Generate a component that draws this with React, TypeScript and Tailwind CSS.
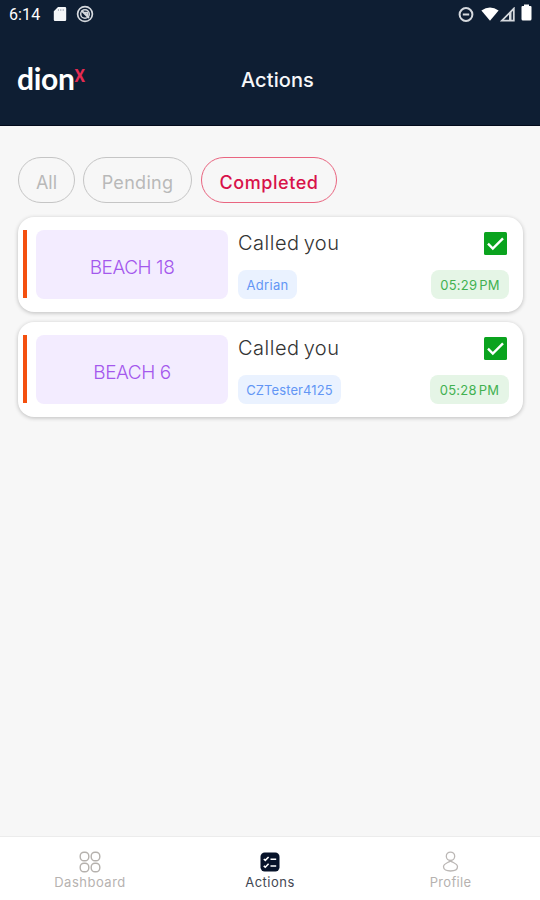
import clsx from 'clsx';

type Action = {
    place: string;
    title: string;
    user: string;
    time: string;
    userClass: string;
    timeClass: string;
};

const actions: Action[] = [
    { place: 'BEACH 18', title: 'Called you', user: 'Adrian', time: '05:29 PM', userClass: 'w-[59px] tracking-[0.3px]', timeClass: 'w-[78px]' },
    { place: 'BEACH 6', title: 'Called you', user: 'CZTester4125', time: '05:28 PM', userClass: 'w-[103px] tracking-[0.1px]', timeClass: 'w-[79px]' },
];

function StatusBar() {
    return (
        <div className="flex h-7 items-center pl-[9px] pr-2 text-white">
            <span className="pt-px font-[Roboto] text-[16px] font-normal leading-7 tracking-[0.1px]">6:14</span>
            <svg className="ml-[13px]" width="14" height="16" viewBox="0 0 14 16">
                <path d="M5 1h7a1.2 1.2 0 0 1 1.2 1.2v11.6A1.2 1.2 0 0 1 12 15H2a1.2 1.2 0 0 1-1.2-1.2V5.2Z" fill="#f4f6f8" />
                <path d="M5.4 3v2M7.8 3v2M10.2 3v2" stroke="#aab1bb" strokeWidth="1" />
            </svg>
            <svg className="ml-[9px]" width="18" height="18" viewBox="0 0 18 18" fill="none" stroke="#d5d9de">
                <circle cx="9" cy="9" r="7.4" strokeWidth="1.7" />
                <circle cx="9" cy="9" r="4.3" strokeWidth="1.5" />
                <path d="M5.5 5.5 13 13M8 7.6h3.4v3.2" strokeWidth="1.8" />
            </svg>
            <div className="ml-auto flex items-center">
                <svg width="16" height="16" viewBox="0 0 16 16" fill="none" stroke="#d5d9de" strokeWidth="2">
                    <circle cx="8" cy="8.5" r="6.4" />
                    <path d="M4.8 8.5h6.4" />
                </svg>
                <svg className="ml-[7px]" width="18" height="15" viewBox="0 0 18 15">
                    <path d="M9 13.8.4 3.6Q9-2.4 17.6 3.6Z" fill="#fff" />
                </svg>
                <svg className="ml-px" width="15" height="15" viewBox="0 0 15 15">
                    <path d="M1.8 13.6H13.8V1.6Z" fill="none" stroke="#d5d9de" strokeWidth="1.8" />
                    <path d="M9 6v7h2.5V4Z" fill="#d5d9de" />
                </svg>
                <svg className="mb-1 ml-[6px]" width="11" height="17" viewBox="0 0 11 17">
                    <path d="M3 .5h5V2h1.5a1 1 0 0 1 1 1v12a1.5 1.5 0 0 1-1.5 1.5H2A1.5 1.5 0 0 1 .5 15V3a1 1 0 0 1 1-1H3Z" fill="#fff" />
                </svg>
            </div>
        </div>
    );
}

function Header() {
    return (
        <header className="h-[126px] border-b border-[#020a1b] bg-[#0e1e33]">
            <StatusBar />
            <div className="grid h-[104px] grid-cols-[241px_1fr] items-center">
                <div className="flex items-center pb-1 pl-[17px] font-[Lato] leading-none text-white">
                    <span className="text-[30px] font-bold tracking-[-0.3px]">dion</span>
                    <span className="mb-[12px] inline-block scale-y-125 text-[20px] font-bold text-[#e62b51]">x</span>
                </div>
                <h1 className="whitespace-nowrap text-[20px] font-medium tracking-[0.1px] text-[#f6f7f9]">Actions</h1>
            </div>
        </header>
    );
}

function Chip({ label, active, className }: { label: string; active?: boolean; className: string }) {
    return (
        <button
            className={clsx(
                'h-[46px] whitespace-nowrap rounded-full border pt-[5px] text-center text-[18px]',
                active ? 'border-[#e96580] font-medium text-[#d8124a]' : 'border-[#c5c5c5] text-[#b9b9b9]',
                className,
            )}
        >
            {label}
        </button>
    );
}

function CheckBox() {
    return (
        <svg width="23" height="23" viewBox="0 0 23 23">
            <rect width="23" height="23" rx="1.5" fill="#0aa31e" />
            <path d="m4 11.7 4.8 4.8L19 6.3" fill="none" stroke="#fff" strokeWidth="2.4" />
        </svg>
    );
}

function ActionCard({ item }: { item: Action }) {
    return (
        <div className="flex h-[95px] rounded-[16px] bg-white py-[13px] pl-[5px] pr-[14px] shadow-[0_1px_4px_rgba(0,0,0,0.24)]">
            <div className="h-[68px] w-1 bg-[#f4500f]" />
            <div className="ml-[9px] flex h-[69px] w-[192px] items-center justify-center rounded-lg bg-[#f3ecff] pt-[7px] text-[19px] font-light tracking-[-0.45px] text-[#a458ed]">
                {item.place}
            </div>
            <div className="ml-[10px] flex flex-1 flex-col justify-between">
                <div className="flex h-[27px] items-center justify-between pr-[2px]">
                    <span className="pb-[2px] text-[20px] font-light tracking-[0.5px] text-[#333] [word-spacing:-2px]">{item.title}</span>
                    <CheckBox />
                </div>
                <div className="flex h-[29px] justify-between whitespace-nowrap text-center text-[13px] leading-[31px]">
                    <span className={clsx('rounded-lg bg-[#eaf2ff] text-[#6396f5]', item.userClass)}>{item.user}</span>
                    <span className={clsx('rounded-lg bg-[#e5f5e6] tracking-[0.25px] text-[#42b151] [word-spacing:-2px]', item.timeClass)}>
                        {item.time}
                    </span>
                </div>
            </div>
        </div>
    );
}

function DashboardIcon() {
    return (
        <svg width="22" height="22" viewBox="0 0 22 22" fill="none" stroke="#b5b1ad" strokeWidth="1.4">
            <rect x="1.2" y="1.2" width="8.6" height="8.6" rx="3.8" />
            <rect x="12.2" y="1.2" width="8.6" height="8.6" rx="3.8" />
            <rect x="1.2" y="12.2" width="8.6" height="8.6" rx="3.8" />
            <rect x="12.2" y="12.2" width="8.6" height="8.6" rx="3.8" />
        </svg>
    );
}

function ActionsIcon() {
    return (
        <svg width="22" height="22" viewBox="0 0 22 22" fill="none">
            <rect x="1.5" y="1.5" width="19" height="19" rx="4.2" fill="#07132a" />
            <path d="m4.8 8 1.5 1.4L9.6 6M4.8 14.8l1.5 1.4 3.3-3.4M11.5 8.2h5.7M11.5 15h5.7" stroke="#fff" strokeWidth="1.6" />
        </svg>
    );
}

function ProfileIcon() {
    return (
        <svg width="22" height="22" viewBox="0 0 22 22" fill="none" stroke="#bbb7b5" strokeWidth="1.3">
            <circle cx="10.5" cy="5.3" r="4.2" />
            <path d="M10.5 9.7c1.8 2 7 2.6 7 6.1 0 2.8-3.2 4.2-7 4.2s-7-1.4-7-4.2c0-3.5 5.2-4.1 7-6.1Z" />
        </svg>
    );
}

function BottomNav() {
    return (
        <nav className="grid h-16 grid-cols-3 border-t border-[#ececec] bg-white pt-[14px] text-[13px] leading-[16px] text-[#b6b2b0]">
            <div className="flex flex-col items-center gap-px">
                <DashboardIcon />
                <span className="tracking-[0.5px]">Dashboard</span>
            </div>
            <div className="flex flex-col items-center gap-px text-[#424752]">
                <ActionsIcon />
                <span className="tracking-[0.5px]">Actions</span>
            </div>
            <div className="flex flex-col items-center gap-px pl-px">
                <ProfileIcon />
                <span className="tracking-[0.3px]">Profile</span>
            </div>
        </nav>
    );
}

export default function App() {
    return (
        <div className="flex h-[900px] w-[540px] flex-col overflow-hidden bg-[#f7f7f7] font-[Inter,sans-serif]">
            <Header />
            <main className="flex-1 pl-[18px] pr-[17px] pt-[31px]">
                <div className="flex">
                    <Chip label="All" className="w-[57px]" />
                    <Chip label="Pending" className="ml-2 w-[109px] tracking-[0.3px]" />
                    <Chip label="Completed" active className="ml-[9px] w-[136px] tracking-[0.55px]" />
                </div>
                <div className="mt-[14px] flex flex-col gap-[10px]">
                    {actions.map((item) => (
                        <ActionCard key={item.place} item={item} />
                    ))}
                </div>
            </main>
            <BottomNav />
        </div>
    );
}
